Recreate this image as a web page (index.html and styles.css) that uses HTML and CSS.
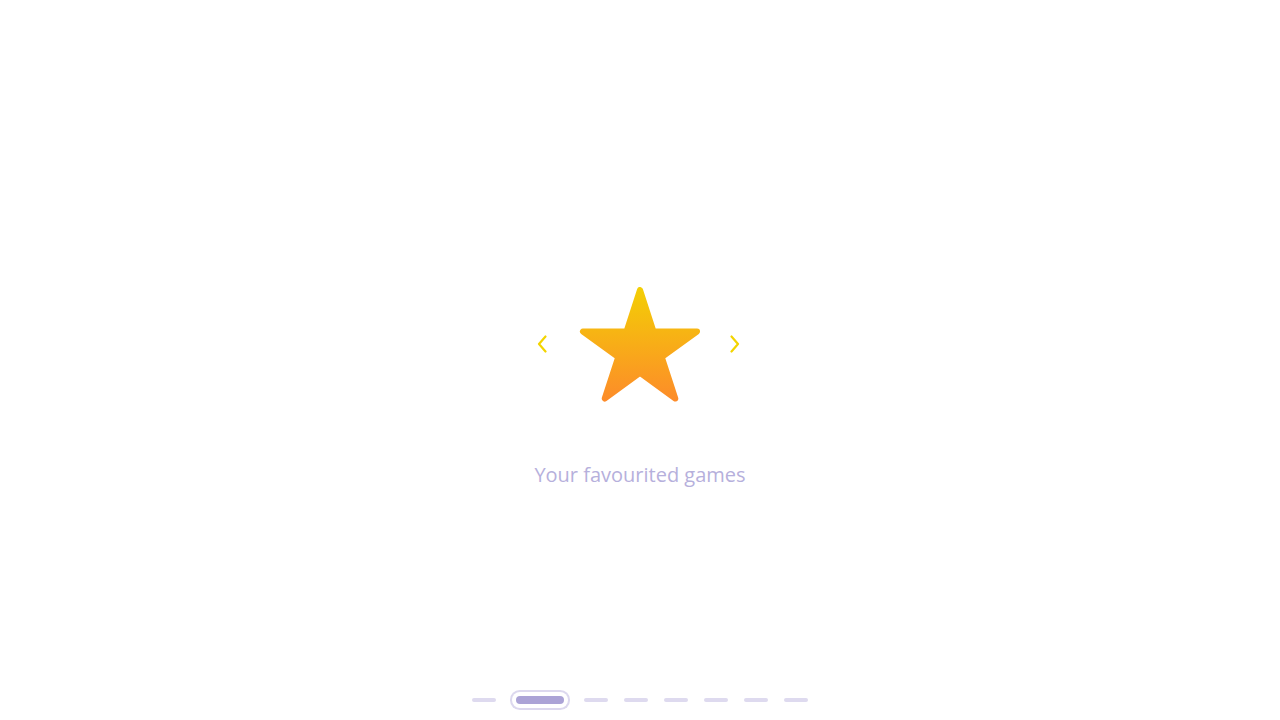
FILE: index.html
```html
<!DOCTYPE html>
<html lang="en">
<head>
<meta charset="utf-8">
<title>Favourites</title>
<link rel="stylesheet" href="styles.css">
</head>
<body>
<div class="page">
  <main class="main">
    <div class="carousel">
      <svg class="chev chev-left" width="12" height="18" viewBox="0 0 12 18">
        <path d="M9.5 1.5 L3 9 L9.5 16.5" fill="none" stroke="#f3d400" stroke-width="2.2" stroke-linecap="round" stroke-linejoin="round"/>
      </svg>
      <svg class="star" width="130" height="122" viewBox="-65 -63 130 122">
        <defs>
          <linearGradient id="g" x1="0" y1="-63" x2="0" y2="52" gradientUnits="userSpaceOnUse">
            <stop offset="0" stop-color="#f3cf05"/>
            <stop offset="1" stop-color="#fd8b2a"/>
          </linearGradient>
        </defs>
        <polygon points="0,-60 13.47,-18.54 57.06,-18.54 21.80,7.08 35.27,48.54 0,22.92 -35.27,48.54 -21.80,7.08 -57.06,-18.54 -13.47,-18.54" fill="url(#g)" stroke="url(#g)" stroke-width="6" stroke-linejoin="round"/>
      </svg>
      <svg class="chev chev-right" width="12" height="18" viewBox="0 0 12 18">
        <path d="M2.5 1.5 L9 9 L2.5 16.5" fill="none" stroke="#f3d400" stroke-width="2.2" stroke-linecap="round" stroke-linejoin="round"/>
      </svg>
    </div>
    <p class="caption">Your favourited games</p>
  </main>
  <nav class="dots">
    <span class="dot"></span>
    <span class="dot dot-active"></span>
    <span class="dot"></span>
    <span class="dot"></span>
    <span class="dot"></span>
    <span class="dot"></span>
    <span class="dot"></span>
    <span class="dot"></span>
  </nav>
</div>
</body>
</html>
```
FILE: styles.css
```css
html, body {
  margin: 0;
  padding: 0;
  background: #ffffff;
}
body {
  font-family: "Open Sans", "Noto Sans", sans-serif;
}
.page {
  height: 720px;
  display: flex;
  flex-direction: column;
}
.main {
  flex: 1;
  display: flex;
  flex-direction: column;
  align-items: center;
  padding-top: 287px;
}
.carousel {
  display: flex;
  align-items: center;
  padding-right: 3px;
}
.chev {
  display: block;
  margin-bottom: 9px;
}
.chev-left {
  margin-right: 27px;
}
.chev-right {
  margin-left: 24px;
}
.star {
  display: block;
}
.caption {
  margin: 52px 0 0;
  font-size: 20px;
  line-height: 28px;
  color: #b6b0dc;
}
.dots {
  height: 20px;
  padding-bottom: 10px;
  display: flex;
  justify-content: center;
  align-items: center;
  gap: 16px;
}
.dot {
  display: block;
  width: 24px;
  height: 4px;
  border-radius: 2px;
  background: #dedaef;
}
.dot-active {
  width: 48px;
  height: 8px;
  margin: 0 4px;
  border-radius: 4px;
  background: #aba3d6;
  box-shadow: 0 0 0 4px #ffffff, 0 0 0 6px #dcd8ee;
}
```
